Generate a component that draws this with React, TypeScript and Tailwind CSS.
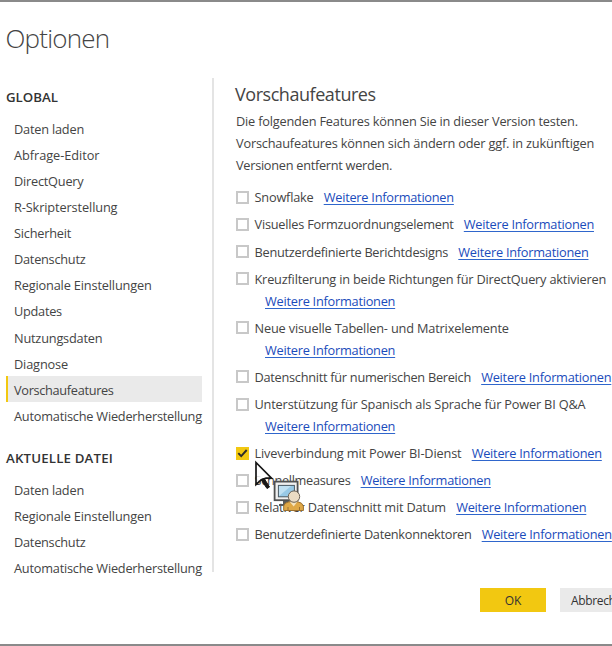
type NavItem = { label: string; tracking: string; active?: boolean };

type Feature = {
  label: string;
  tracking: string;
  checked?: boolean;
  link: "inline" | "below";
};

const globalItems: NavItem[] = [
  { label: "Daten laden", tracking: "tracking-[-0.2px]" },
  { label: "Abfrage-Editor", tracking: "tracking-[-0.05px]" },
  { label: "DirectQuery", tracking: "tracking-[-0.23px]" },
  { label: "R-Skripterstellung", tracking: "tracking-[-0.12px]" },
  { label: "Sicherheit", tracking: "tracking-[-0.23px]" },
  { label: "Datenschutz", tracking: "tracking-[-0.25px]" },
  { label: "Regionale Einstellungen", tracking: "tracking-[-0.16px]" },
  { label: "Updates", tracking: "tracking-[-0.26px]" },
  { label: "Nutzungsdaten", tracking: "tracking-[-0.2px]" },
  { label: "Diagnose", tracking: "tracking-[-0.15px]" },
  { label: "Vorschaufeatures", tracking: "tracking-[-0.32px]", active: true },
  { label: "Automatische Wiederherstellung", tracking: "tracking-[-0.22px]" },
];

const fileItems: NavItem[] = [
  { label: "Daten laden", tracking: "tracking-[-0.2px]" },
  { label: "Regionale Einstellungen", tracking: "tracking-[-0.16px]" },
  { label: "Datenschutz", tracking: "tracking-[-0.25px]" },
  { label: "Automatische Wiederherstellung", tracking: "tracking-[-0.22px]" },
];

const features: Feature[] = [
  { label: "Snowflake", tracking: "tracking-[-0.2px]", link: "inline" },
  { label: "Visuelles Formzuordnungselement", tracking: "tracking-[-0.22px]", link: "inline" },
  { label: "Benutzerdefinierte Berichtdesigns", tracking: "tracking-[-0.26px]", link: "inline" },
  { label: "Kreuzfilterung in beide Richtungen für DirectQuery aktivieren", tracking: "tracking-[-0.19px]", link: "below" },
  { label: "Neue visuelle Tabellen- und Matrixelemente", tracking: "tracking-[-0.17px]", link: "below" },
  { label: "Datenschnitt für numerischen Bereich", tracking: "tracking-[-0.27px]", link: "inline" },
  { label: "Unterstützung für Spanisch als Sprache für Power BI Q&A", tracking: "tracking-[-0.18px]", link: "below" },
  { label: "Liveverbindung mit Power BI-Dienst", tracking: "tracking-[-0.16px]", link: "inline", checked: true },
  { label: "Schnellmeasures", tracking: "tracking-[-0.32px]", link: "inline" },
  { label: "Relativer Datenschnitt mit Datum", tracking: "tracking-[-0.2px]", link: "inline" },
  { label: "Benutzerdefinierte Datenkonnektoren", tracking: "tracking-[-0.285px]", link: "inline" },
];

function NavList({ items }: { items: NavItem[] }) {
  return (
    <ul>
      {items.map((item) => (
        <li
          key={item.label}
          className={`flex h-[26.1px] w-[196px] items-center whitespace-nowrap border-l-2 pl-1.5 pt-[2px] ${
            item.active ? "border-[#f2c811] bg-[#eaeaea]" : "border-transparent"
          }`}
        >
          <span className={item.tracking}>{item.label}</span>
        </li>
      ))}
    </ul>
  );
}

function Checkbox({ checked }: { checked?: boolean }) {
  if (checked) {
    return (
      <span className="mb-[1.5px] flex size-[13px] shrink-0 items-center justify-center bg-[#f2c811]">
        <svg viewBox="0 0 13 13" className="size-[13px]" fill="none" stroke="#2b2b2b" strokeWidth="1.9">
          <path d="M2.3 6.1 5.2 9.2 10.7 3" />
        </svg>
      </span>
    );
  }
  return <span className="mb-[1.5px] size-[13px] shrink-0 border-2 border-[#c8c8c8] bg-white" />;
}

function MoreLink() {
  return (
    <a className="whitespace-nowrap tracking-[-0.24px] text-[#1a4bbb] underline decoration-[#2f66cc] decoration-[1.3px] underline-offset-[2px]">
      Weitere Informationen
    </a>
  );
}

function FeatureRow({ feature }: { feature: Feature }) {
  return (
    <li className="mb-[5.4px] leading-[21.8px]">
      <div className="flex items-center whitespace-nowrap">
        <Checkbox checked={feature.checked} />
        <span className={`ml-[5.5px] mr-[10.2px] ${feature.tracking}`}>{feature.label}</span>
        {feature.link === "inline" && <MoreLink />}
      </div>
      {feature.link === "below" && (
        <div className="pl-[29px]">
          <MoreLink />
        </div>
      )}
    </li>
  );
}

// Arrow pointer with the "run as user" badge: a monitor with a person in front.
function BadgeCursor() {
  return (
    <svg className="absolute left-[254px] top-[457px]" width="52" height="56" viewBox="0 0 52 56">
      <path d="M2 3.5V25.5L7 21 12 19.2H17.5Z" fill="#fff" fillOpacity=".85" stroke="#161616" strokeWidth="1.7" />
      <path d="M7 20.5 10.2 19.5 15.5 28 13 29.5Z" fill="#161616" stroke="#161616" />
      <path d="M29 40h10v4h4v3H25v-2h4Z" fill="#5b5b5b" />
      <rect x="20.6" y="22.6" width="23" height="18.6" fill="#f0f0f0" stroke="#505050" strokeWidth="1.8" />
      <rect x="24.4" y="26.4" width="16" height="11.4" fill="#98c9e6" stroke="#4d5a63" />
      <path d="M25 37V27h12Z" fill="#c0e0f2" />
      <path d="M29.7 51.5v-4.6q.8-3.4 5.2-4.1h9q4.5.8 5.5 4.3v4.4Z" fill="#dfa848" stroke="#9a7030" />
      <path d="M35.5 42.5h8l-3.8 5Z" fill="#f6e3bd" />
      <path d="M34 51v-3M45.5 51v-3" stroke="#9a7030" />
      <circle cx="40" cy="37.6" r="5.7" fill="#eadbc4" stroke="#6b6156" />
    </svg>
  );
}

export default function App() {
  return (
    <div className="relative flex h-[646px] w-[612px] flex-col overflow-hidden border-y-2 border-[#8a8a8a] bg-white font-['Open_Sans',sans-serif] text-[12.75px] text-[#444]">
      <h1 className="ml-[5.5px] mt-[18px] h-[58px] text-[26px] font-light leading-9 tracking-[-0.8px]">Optionen</h1>

      <div className="flex h-[494px]">
        <nav className="w-[207px] shrink-0 pl-1.5">
          <h2 className="pt-[9px] text-[13.25px] font-semibold leading-5 text-[#333]">GLOBAL</h2>
          <div className="mt-[8.3px]">
            <NavList items={globalItems} />
          </div>
          <h2 className="mt-[20px] text-[13.25px] font-semibold leading-5 tracking-[0.17px] text-[#333]">AKTUELLE DATEI</h2>
          <div className="mt-[8.2px]">
            <NavList items={fileItems} />
          </div>
        </nav>

        <main className="ml-[5px] grow border-l-2 border-[#e4e4e4] pl-[22px]">
          <h2 className="ml-[-1px] mt-[3.5px] text-[18px] leading-6 tracking-[-0.45px]">Vorschaufeatures</h2>
          <div className="mt-[5.5px] whitespace-nowrap leading-[21.8px]">
            <p className="tracking-[-0.19px]">Die folgenden Features können Sie in dieser Version testen.</p>
            <p className="tracking-[-0.19px]">Vorschaufeatures können sich ändern oder ggf. in zukünftigen</p>
            <p className="tracking-[-0.28px]">Versionen entfernt werden.</p>
          </div>
          <ul className="mt-[10.8px]">
            {features.map((f) => (
              <FeatureRow key={f.label} feature={f} />
            ))}
          </ul>
        </main>
      </div>

      <footer className="mt-[16px] flex gap-[14px] pl-[480px] text-[12px] text-[#333]">
        <button className="h-6 w-[66px] shrink-0 bg-[#f2c811] pt-[2px]">OK</button>
        <button className="h-6 w-[76px] shrink-0 bg-[#eaeaea] pl-[11px] pt-[2px] text-left tracking-[-0.35px]">Abbrechen</button>
      </footer>

      <BadgeCursor />
    </div>
  );
}
